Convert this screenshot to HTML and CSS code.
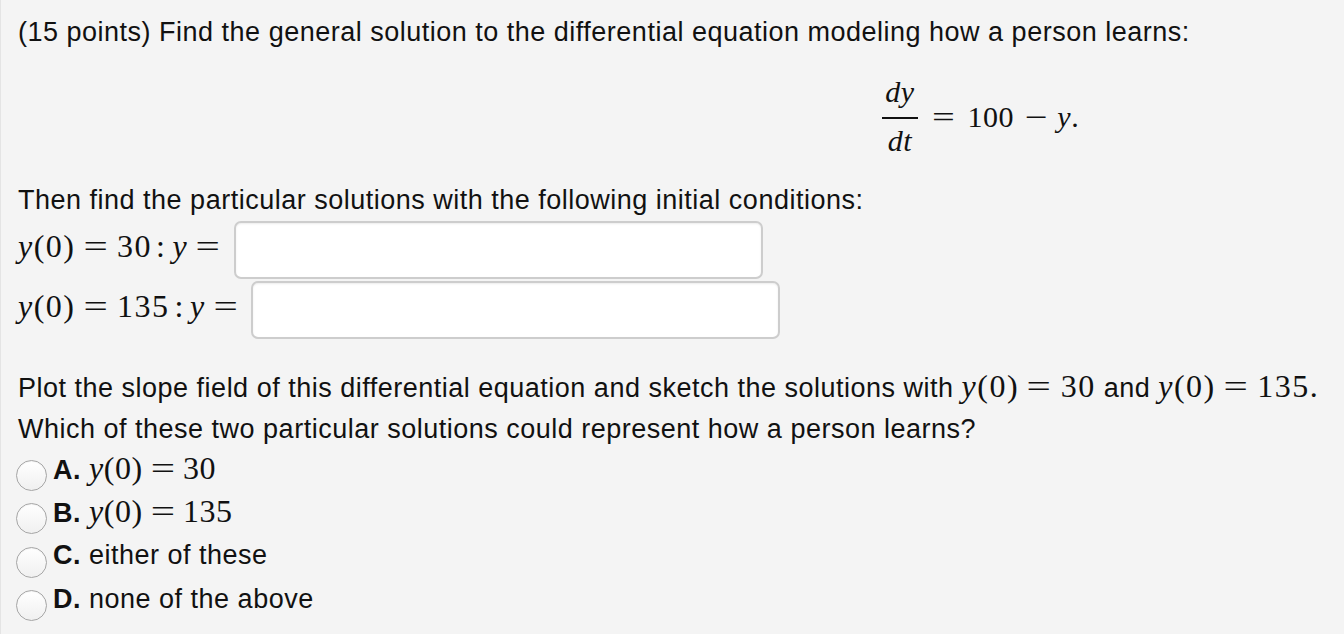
FILE: index.html
```html
<!DOCTYPE html>
<html>
<head>
<meta charset="utf-8">
<link rel="stylesheet" href="styles.css">
</head>
<body>
<div class="page">
  <p class="line l1">(15 points) Find the general solution to the differential equation modeling how a person learns:</p>
  <div class="display">
    <span class="frac"><span class="num mi">dy</span><span class="bar"></span><span class="den mi">dt</span></span>
    <span class="m eq"><span class="wide">=</span></span><span class="m">100</span><span class="m op"><span class="wide">−</span></span><span class="m mi">y</span><span class="m">.</span>
  </div>
  <p class="line l2">Then find the particular solutions with the following initial conditions:</p>
  <div class="row r1">
    <span class="math"><span class="mi">y</span>(0)<span class="rel"><span class="wide">=</span></span>30<span class="colon">:</span><span class="mi">y</span><span class="rel"><span class="wide">=</span></span></span>
    <span class="box"></span>
  </div>
  <div class="row r2">
    <span class="math"><span class="mi">y</span>(0)<span class="rel"><span class="wide">=</span></span>135<span class="colon sp">:</span><span class="mi">y</span><span class="rel"><span class="wide">=</span></span></span>
    <span class="box"></span>
  </div>
  <p class="line l3">Plot the slope field of this differential equation and sketch the solutions with <span class="math"><span class="mi">y</span>(0)<span class="rel"><span class="wide">=</span></span>30</span> and <span class="math"><span class="mi">y</span>(0)<span class="rel"><span class="wide">=</span></span>135.</span></p>
  <p class="line l4">Which of these two particular solutions could represent how a person learns?</p>
  <div class="opts">
    <div class="opt"><span class="radio"></span><span class="lab"><b>A.</b> <span class="math"><span class="mi">y</span>(0)<span class="rel"><span class="wide">=</span></span>30</span></span></div>
    <div class="opt"><span class="radio"></span><span class="lab"><b>B.</b> <span class="math"><span class="mi">y</span>(0)<span class="rel"><span class="wide">=</span></span>135</span></span></div>
    <div class="opt"><span class="radio"></span><span class="lab"><b>C.</b> either of these</span></div>
    <div class="opt"><span class="radio"></span><span class="lab"><b>D.</b> none of the above</span></div>
  </div>
</div>
</body>
</html>
```

FILE: styles.css
```css
html, body {
  margin: 0;
  padding: 0;
  background: #f4f4f4;
}
body {
  width: 1344px;
  height: 634px;
  overflow: hidden;
  border-left: 1px solid #e4e4e4;
  box-sizing: border-box;
}
.page {
  padding: 17px 0 0 17px;
  font-family: "Liberation Sans", Arial, Helvetica, sans-serif;
  font-size: 27px;
  letter-spacing: 0.5px;
  color: #111;
}
.line {
  margin: 0;
  line-height: 30px;
  white-space: nowrap;
}
.math {
  font-family: "Liberation Serif", "Times New Roman", serif;
  font-size: 32px;
  letter-spacing: 1.5px;
}
.mi {
  font-style: italic;
}
.wide {
  display: inline-block;
  transform: scaleX(1.35);
}
.rel {
  display: inline-block;
  margin: 0 11px;
}
.colon {
  margin: 0 6px 0 4px;
}
.colon.sp {
  margin: 0 5px 0 5px;
}
.display {
  display: flex;
  align-items: center;
  margin: 30px 0 0 864px;
  height: 79px;
  font-family: "Liberation Serif", "Times New Roman", serif;
  font-size: 30px;
  letter-spacing: 0.5px;
}
.frac {
  display: inline-flex;
  flex-direction: column;
  align-items: center;
  width: 36px;
}
.frac .num, .frac .den {
  line-height: 30px;
}
.frac .bar {
  align-self: stretch;
  height: 2px;
  background: #111;
  margin: 10px 0 7px;
}
.m { line-height: 30px; }
.eq { margin: 0 15px 0 17px; }
.op { margin: 0 12px 0 14px; }
.l2 {
  margin-top: 29px;
}
.row {
  display: flex;
  align-items: center;
  height: 60px;
}
.row .math {
  line-height: 30px;
  margin-bottom: 8px;
  margin-right: 4px;
}
.r1 { margin-top: 5px; }
.box {
  display: block;
  width: 525px;
  height: 54px;
  border: 2px solid #cdcdcd;
  border-radius: 7px;
  background: #fff;
  box-shadow: inset 0 1px 2px rgba(0,0,0,0.08);
}
.l3 { margin-top: 31px; }
.l4 { margin-top: 11px; }
.opts {
  margin: 3px 0 0 -2px;
}
.opt {
  display: flex;
  align-items: center;
  height: 43.3px;
  line-height: 30px;
  white-space: nowrap;
}
.opt .math {
  letter-spacing: 0.5px;
}
.opt .rel {
  margin: 0 11px;
}
.lab { margin-left: 6px; }
.radio {
  display: inline-block;
  width: 29px;
  height: 29px;
  margin-top: 14px;
  border: 1px solid #a6a6a6;
  border-radius: 50%;
  background: linear-gradient(#ffffff, #f0f0f0);
  box-shadow: inset 0 1px 1px rgba(0,0,0,0.05);
}
```
